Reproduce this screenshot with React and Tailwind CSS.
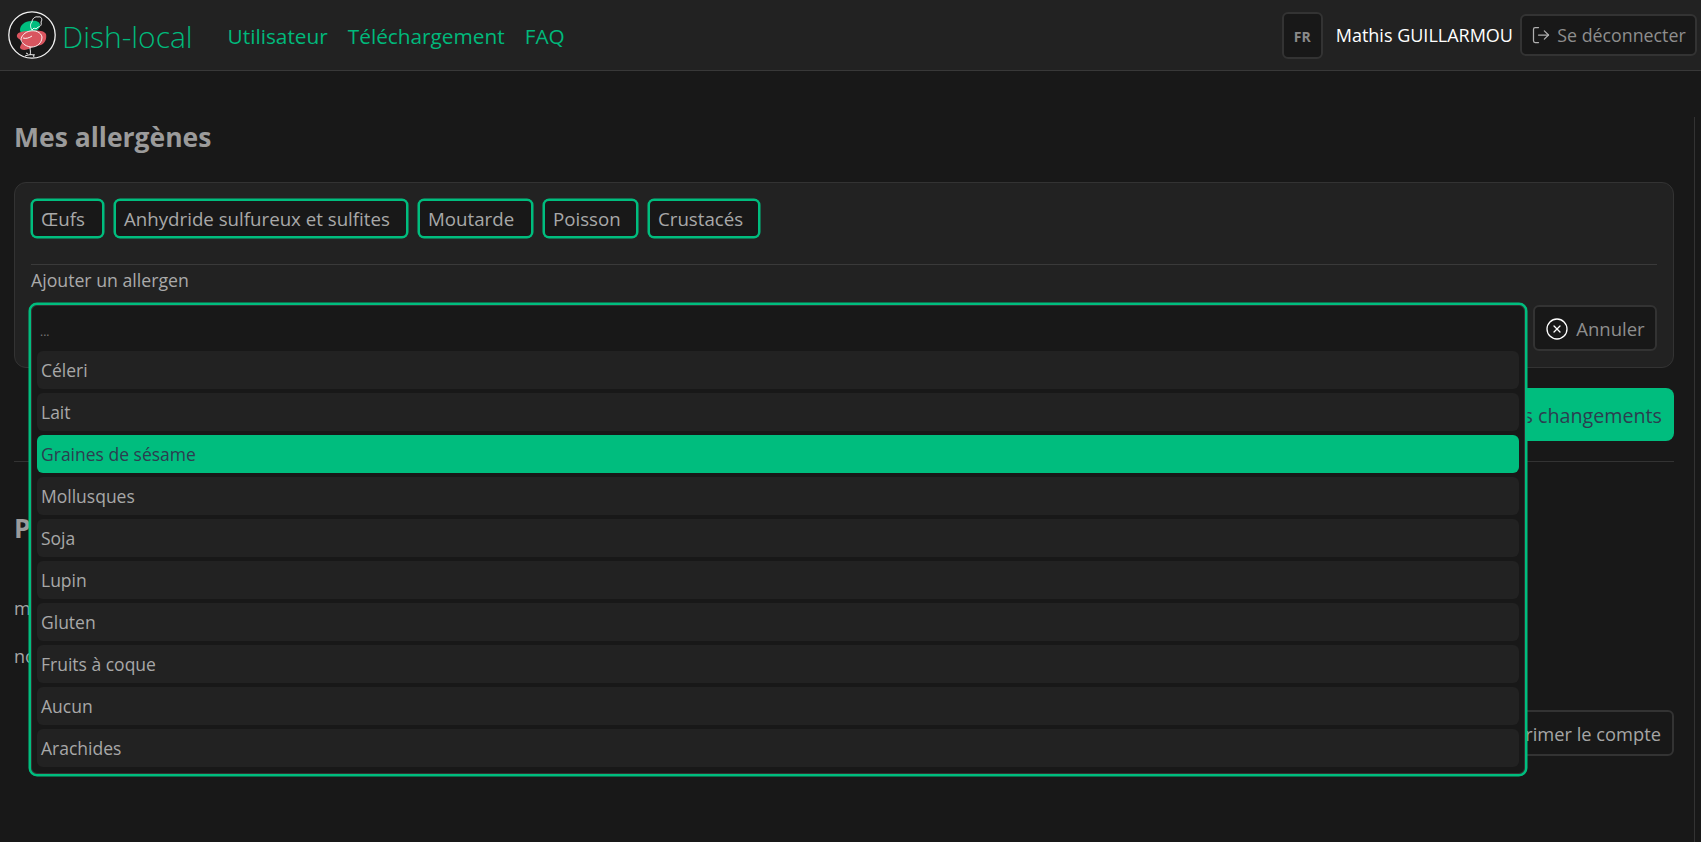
import React from 'react';
import { LogOut, CircleX } from 'lucide-react';

const chips = ['Œufs', 'Anhydride sulfureux et sulfites', 'Moutarde', 'Poisson', 'Crustacés'];
const chipWidths = ['w-[73px]', 'w-[294px]', 'w-[115px]', 'w-[95px]', 'w-[112px]'];
const options = ['Céleri', 'Lait', 'Graines de sésame', 'Mollusques', 'Soja', 'Lupin', 'Gluten', 'Fruits à coque', 'Aucun', 'Arachides'];

const Logo = () => (
  <svg width="48" height="48" viewBox="0 0 48 48" fill="none">
    <circle cx="24" cy="24" r="23.2" fill="#181818" stroke="#f2f2f2" strokeWidth="1.3" />
    <path d="M12 19c0-5 5-9 11-9 5-1 9 1 9 4 0 5-6 8-11 8-4 0-9 1-9-3z" fill="#00bd7e" />
    <path d="M9 24c1-3 6-4 12-4 7-1 15-1 17 3 1 5-1 9-5 11-3 1-7 1-10 3-4 2-9 3-11 0 0-3 3-5 2-7-2-2-6-3-5-6z" fill="#d9555f" />
    <path d="M24 19c-2-3-2-6 0-8 0-3 3-6 6-5 3-1 5 2 3 5 1 3-1 5-3 5-1 2-3 2-4 1l-2 2" stroke="#fff" strokeWidth="0.9" />
    <path d="M22 20c5-1 11 1 12 6 0 6-5 10-10 10-5 0-10-3-11-7 0-4 4-8 9-9z" stroke="#fff" strokeWidth="0.9" />
    <path d="M15 27c3 1 6 0 9-2M22 36c0 3 1 5 0 8M17 45c2-1 7-2 10-1M20 43l-2-1M25 44l1 2" stroke="#fff" strokeWidth="0.9" />
  </svg>
);

const App = () => {
  return (
    <div className="h-[842px] overflow-hidden bg-[#181818] font-['Open_Sans','Noto_Sans',sans-serif] text-[#a6a6a6]">
      <header className="flex h-[71px] items-center border-b border-[#383838] bg-[#222222] pl-[8px] pr-[4px]">
        <Logo />
        <a className="ml-[6px] pt-[2px] text-[30px] font-light text-[#00b97b]">Dish-local</a>
        <nav className="ml-[35px] flex gap-[20px] pt-[3px] text-[20.8px] text-[#00b97b]">
          <a>Utilisateur</a>
          <a>Téléchargement</a>
          <a>FAQ</a>
        </nav>
        <div className="ml-auto flex h-[47px] w-[41px] items-center justify-center rounded-md border-2 border-[#333333] bg-[#181818] pt-1 text-sm font-bold text-[#8a8a8a]">FR</div>
        <span className="ml-[13px] text-[18px] text-white">Mathis GUILLARMOU</span>
        <button className="ml-[7px] flex h-[42px] w-[177px] items-center justify-center gap-[6px] rounded-md border-2 border-[#333333] bg-[#181818] text-[17.8px] text-[#8e8e8e]">
          <LogOut size={20} strokeWidth={1.5} className="text-[#b0b0b0]" />
          Se déconnecter
        </button>
      </header>

      <main className="h-[771px] w-[1695px] border-r border-[#333333] pl-[14px] pr-[20px]">
        <h2 className="mt-[46px] text-[26.5px] leading-[40px] font-bold text-[#9b9b9b]">Mes allergènes</h2>

        <section className="mt-[25px] h-[186px] rounded-xl border border-[#333333] bg-[#222222] px-[16px] pt-[16px]">
          <div className="flex gap-[10px]">
            {chips.map((chip, i) => (
              <span key={chip} className={`flex h-[39px] items-center rounded-md border-2 border-[#00bd7e] bg-[#181818] pl-[8px] pt-[1px] text-[18.7px] text-[#a8a8a8] shadow-[0_0_0_0.5px_#00bd7e] ${chipWidths[i]}`}>
                {chip}
              </span>
            ))}
          </div>
          <div className="mt-[26px] border-t border-[#3a3a3a] pt-[2px] text-[17.7px] leading-[26px] text-[#aaaaaa]">Ajouter un allergen</div>
          <div className="relative mt-[10px] flex justify-end">
            <div className="absolute left-[-2px] top-0 z-10 h-[473px] w-[1498px] rounded-lg border-2 border-[#00bd7e] bg-[#181818] p-[6px] shadow-[0_0_0_0.5px_#00bd7e,inset_0_0_0_1px_#333333]">
              <div className="h-[40px] pl-[3px] pt-[13px] text-[12px] leading-[16px] text-[#777777]">...</div>
              <ul className="flex flex-col gap-[4px]">
                {options.map((option) => (
                  <li
                    key={option}
                    className={option === 'Graines de sésame'
                      ? 'flex h-[38px] items-center rounded-md bg-[#00bd7e] pl-[4px] text-[17.5px] text-[#2c3e50]'
                      : 'flex h-[38px] items-center rounded-md bg-[#222222] pl-[4px] text-[17.5px] text-[#a8a8a8]'}
                  >
                    {option}
                  </li>
                ))}
              </ul>
            </div>
            <button className="mt-[2px] flex h-[46px] w-[124px] items-center justify-center gap-[7px] rounded-md border-2 border-[#333333] bg-[#181818] pt-[1px] text-[18.5px] font-medium text-[#8e8e8e]">
              <CircleX size={24} strokeWidth={1.3} className="text-white" />
              Annuler
            </button>
          </div>
        </section>

        <div className="mt-[20px] flex justify-end">
          <button className="h-[53px] rounded-lg bg-[#00bd7e] px-[12px] pt-[2px] text-[19.7px] text-[#2c3e50]">Enregistrer les changements</button>
        </div>
        <hr className="mt-[20px] border-[#333333]" />

        <h2 className="mt-[46px] text-[26.5px] leading-[40px] font-bold text-[#9b9b9b]">Profil</h2>
        <p className="mt-[46px] text-[18px] leading-[28px]">mail</p>
        <p className="mt-[20px] text-[18px] leading-[28px]">nom</p>
        <div className="mt-[40px] flex justify-end">
          <button className="h-[46px] rounded-md border-2 border-[#333333] bg-[#181818] px-[11px] pt-[1px] text-[18.3px] text-[#a6a6a6]">Supprimer le compte</button>
        </div>
      </main>
    </div>
  );
};

export default App;
